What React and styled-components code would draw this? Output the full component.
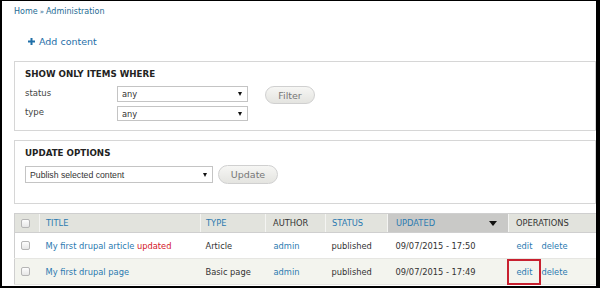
import React from "react";
import styled, { createGlobalStyle } from "styled-components";

const Global = createGlobalStyle`
  html, body { margin: 0; padding: 0; background: #fff; }
  body { font-family: "DejaVu Sans", "Noto Sans", sans-serif; color: #333; }
`;

const Frame = styled.div`
  box-sizing: border-box;
  width: 600px;
  height: 288px;
  overflow: hidden;
  border-style: solid;
  border-color: #000;
  border-width: 1px 4px 2px 2px;
  padding: 0 0 0 12px;
  background: #fff;
`;

const Breadcrumb = styled.div`
  font-size: 8px;
  color: #1d6b93;
  height: 12px;
  line-height: 12px;
  margin-top: 5px;
  word-spacing: -0.5px;
`;

const Sep = styled.span`
  font-size: 7px;
`;

const AddLink = styled.div`
  display: flex;
  align-items: center;
  gap: 4px;
  margin: 16px 0 0 14px;
  height: 14px;
  font-size: 9.5px;
  color: #1f6fa8;
`;

const Panel = styled.div`
  box-sizing: border-box;
  border: 1px solid #d6d6d6;
  height: ${(p) => p.$h}px;
  margin-top: ${(p) => p.$mt}px;
  padding: 6px 10px 0 10px;
`;

const Legend = styled.div`
  font-size: 8.7px;
  font-weight: bold;
  color: #222;
  height: 12px;
  line-height: 12px;
`;

const FilterWrap = styled.div`
  display: flex;
  align-items: flex-start;
  gap: 17px;
  margin-top: 6px;
`;

const FilterGrid = styled.div`
  display: grid;
  grid-template-columns: 92px 131px;
  row-gap: 4px;
  align-items: center;
`;

const Label = styled.div`
  font-size: 8.5px;
  color: #444;
  line-height: 12px;
  margin-top: -3px;
`;

const SelectBox = styled.div`
  box-sizing: border-box;
  width: ${(p) => p.$w}px;
  height: ${(p) => p.$h}px;
  border: 1px solid #c4c4c4;
  background: #fff;
  display: flex;
  align-items: center;
  justify-content: space-between;
  padding: 0 5px 0 4px;
  font-family: ${(p) => (p.$arial ? '"Liberation Sans", Arial, sans-serif' : '"DejaVu Sans", sans-serif')};
  font-size: ${(p) => (p.$arial ? 8.7 : 8.3)}px;
  color: #333;
`;

const Arrow = styled.span`
  width: 0;
  height: 0;
  border-left: 2.5px solid transparent;
  border-right: 2.5px solid transparent;
  border-top: 4px solid #111;
`;

const Button = styled.div`
  box-sizing: border-box;
  width: ${(p) => p.$w}px;
  height: ${(p) => p.$h}px;
  border: 1px solid #d0d0d0;
  border-radius: 10px;
  background: linear-gradient(#f6f6f4, #e4e4e0);
  color: #777;
  font-size: 9.5px;
  display: flex;
  align-items: center;
  justify-content: center;
`;

const UpdateRow = styled.div`
  display: flex;
  align-items: center;
  gap: 5px;
  margin-top: 6px;
`;

const Table = styled.table`
  margin-top: 9px;
  width: 582px;
  border-collapse: collapse;
  table-layout: fixed;
  font-size: 8.3px;
`;

const Th = styled.th`
  height: 18px;
  padding: 0 0 0 ${(p) => p.$pl ?? 6}px;
  text-align: left;
  font-weight: normal;
  text-transform: uppercase;
  color: ${(p) => (p.$link ? "#2b7ab0" : "#333")};
  background: ${(p) => (p.$active ? "#c9c9c7" : "#e2e3dd")};
  border-top: 1px solid #cfcfcf;
  border-bottom: 1px solid #cfcfcf;
  border-left: 1px solid #f4f4f2;
  &:first-child { border-left: 1px solid #cfcfcf; }
  white-space: nowrap;
`;

const SortHead = styled.div`
  display: flex;
  align-items: center;
  justify-content: space-between;
  padding-right: 11px;
`;

const SortArrow = styled.span`
  width: 0;
  height: 0;
  border-left: 4px solid transparent;
  border-right: 4px solid transparent;
  border-top: 5px solid #111;
`;

const Tr = styled.tr`
  background: ${(p) => (p.$alt ? "#f3f4ee" : "#fff")};
`;

const Td = styled.td`
  height: ${(p) => p.$h}px;
  padding: 0 0 0 ${(p) => p.$pl ?? 6}px;
  border-bottom: 1px solid #e6e6e2;
  white-space: nowrap;
  color: #333;
  &:first-child { border-left: 1px solid #cfcfcf; }
`;

const Check = styled.span`
  display: block;
  box-sizing: border-box;
  width: 9px;
  height: 9px;
  border: 1px solid #b5b5b5;
  border-radius: 2px;
  background: linear-gradient(#fdfdfd, #e6e6e6);
  margin-left: 6px;
`;

const A = styled.span`
  color: #2b7ab0;
`;

const Red = styled.span`
  color: #d4162a;
`;

const Ops = styled.div`
  display: flex;
  align-items: center;
  gap: 9px;
`;

const Boxed = styled.span`
  position: relative;
  &::after {
    content: "";
    position: absolute;
    left: -10px;
    right: -9px;
    top: -8px;
    bottom: -8px;
    border: 2px solid #c8202f;
  }
`;

const rows = [
  { title: "My first drupal article", upd: true, type: "Article", time: "09/07/2015 - 17:50" },
  { title: "My first drupal page", upd: false, type: "Basic page", time: "09/07/2015 - 17:49", boxed: true },
];

export default function App() {
  return (
    <>
      <Global />
      <Frame>
        <Breadcrumb>
          Home <Sep>»</Sep> Administration
        </Breadcrumb>
        <AddLink>
          <svg width="7" height="7" viewBox="0 0 7 7">
            <path d="M2.5 0h2v2.5H7v2H4.5V7h-2V4.5H0v-2h2.5z" fill="#1f6fa8" />
          </svg>
          Add content
        </AddLink>
        <Panel $h={70} $mt={13}>
          <Legend>SHOW ONLY ITEMS WHERE</Legend>
          <FilterWrap>
            <FilterGrid>
              <Label>status</Label>
              <SelectBox $w={131} $h={16}>
                any <Arrow />
              </SelectBox>
              <Label>type</Label>
              <SelectBox $w={131} $h={15}>
                any <Arrow />
              </SelectBox>
            </FilterGrid>
            <Button $w={50} $h={18}>Filter</Button>
          </FilterWrap>
        </Panel>
        <Panel $h={64} $mt={9}>
          <Legend>UPDATE OPTIONS</Legend>
          <UpdateRow>
            <SelectBox $w={188} $h={17} $arial>
              Publish selected content <Arrow />
            </SelectBox>
            <Button $w={60} $h={19}>Update</Button>
          </UpdateRow>
        </Panel>
        <Table>
          <colgroup>
            <col style={{ width: 25 }} />
            <col style={{ width: 161 }} />
            <col style={{ width: 65 }} />
            <col style={{ width: 60 }} />
            <col style={{ width: 62 }} />
            <col style={{ width: 121 }} />
            <col style={{ width: 88 }} />
          </colgroup>
          <thead>
            <tr>
              <Th $pl={0}><Check /></Th>
              <Th $link>Title</Th>
              <Th $link $pl={5}>Type</Th>
              <Th $pl={7}>Author</Th>
              <Th $link>Status</Th>
              <Th $link $active $pl={8}>
                <SortHead>Updated <SortArrow /></SortHead>
              </Th>
              <Th $pl={7}>Operations</Th>
            </tr>
          </thead>
          <tbody>
            {rows.map((r, i) => (
              <Tr key={i} $alt={i % 2 === 1}>
                <Td $h={25} $pl={0}><Check /></Td>
                <Td>
                  <A>{r.title}</A>
                  {r.upd && <Red> updated</Red>}
                </Td>
                <Td $pl={5}>{r.type}</Td>
                <Td $pl={8}><A>admin</A></Td>
                <Td>published</Td>
                <Td $pl={8}>{r.time}</Td>
                <Td $pl={8}>
                  <Ops>
                    {r.boxed ? <Boxed><A>edit</A></Boxed> : <A>edit</A>}
                    <A>delete</A>
                  </Ops>
                </Td>
              </Tr>
            ))}
          </tbody>
        </Table>
      </Frame>
    </>
  );
}
